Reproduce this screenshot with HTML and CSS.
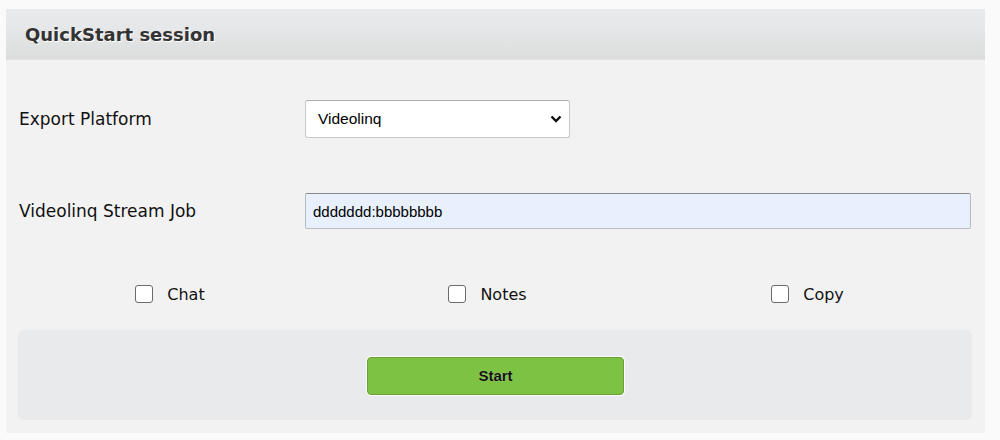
FILE: index.html
```html
<!DOCTYPE html>
<html>
<head>
<meta charset="utf-8">
<link rel="stylesheet" href="styles.css">
</head>
<body>
<div class="panel">
  <div class="panel-header">QuickStart session</div>
  <div class="panel-body">
    <div class="form-row row-platform">
      <label class="form-label">Export Platform</label>
      <div class="select">
        <span class="select-value">Videolinq</span>
        <svg class="select-arrow" width="12" height="8" viewBox="0 0 12 8"><path d="M1.5 1.5 L6 6 L10.5 1.5" fill="none" stroke="#111" stroke-width="2.4"/></svg>
      </div>
    </div>
    <div class="form-row row-job">
      <label class="form-label">Videolinq Stream Job</label>
      <div class="text-input">ddddddd:bbbbbbbb</div>
    </div>
    <div class="checks">
      <label class="check"><span class="box"></span><span>Chat</span></label>
      <label class="check"><span class="box"></span><span>Notes</span></label>
      <label class="check"><span class="box"></span><span>Copy</span></label>
    </div>
    <div class="actions">
      <button class="start-btn">Start</button>
    </div>
  </div>
</div>
</body>
</html>
```
FILE: styles.css
```css
html, body {
  margin: 0;
  padding: 0;
  background: #fafafa;
}
body {
  padding: 9px 15px 0 6px;
  font-family: Verdana, "DejaVu Sans", sans-serif;
}
.panel {
  width: 979px;
  background: #f2f2f2;
}
.panel-header {
  height: 51px;
  box-sizing: border-box;
  padding: 15px 0 0 19px;
  font-size: 18px;
  font-weight: bold;
  color: #333;
  text-shadow: 1px 1px 0 #fff;
  background: linear-gradient(#e9eaeb, #e6e7e8 40%, #dbdcdc);
  border-bottom: 1px solid #e0e0e0;
}
.panel-body {
  padding: 0 13px 13px 12px;
}
.form-row {
  display: flex;
  align-items: center;
}
.row-platform {
  padding-top: 40px;
  height: 38px;
}
.row-job {
  padding-top: 55px;
  height: 36px;
}
.form-label {
  width: 286px;
  font-size: 17px;
  color: #111;
  padding-left: 1px;
}
.select {
  width: 265px;
  height: 38px;
  box-sizing: border-box;
  background: #fff;
  border: 1px solid #c8c8c8;
  border-top-color: #b0b0b0;
  border-radius: 3px;
  display: flex;
  align-items: center;
  justify-content: space-between;
  padding: 0 7px 0 12px;
  font-family: "Liberation Sans", Arial, sans-serif;
  font-size: 15.5px;
  color: #000;
}
.text-input {
  flex: 1;
  height: 36px;
  margin-right: 1px;
  box-sizing: border-box;
  background: #e8f0fe;
  border: 1px solid #b8bcc2;
  border-top-color: #8a8a8a;
  border-radius: 2px;
  display: flex;
  align-items: center;
  padding: 0 7px;
  font-family: "Liberation Sans", Arial, sans-serif;
  font-size: 15px;
  color: #000;
}
.checks {
  display: grid;
  grid-template-columns: 1fr 1fr 1fr;
  margin-top: 51px;
  height: 28px;
  align-items: center;
}
.check {
  display: flex;
  align-items: center;
  justify-content: center;
  gap: 14px;
  font-size: 16px;
  color: #111;
}
.check:nth-child(1) { margin-left: -14px; }
.check:nth-child(2) { margin-left: -15px; }
.check:nth-child(3) { margin-left: -11px; }
.box {
  width: 18px;
  height: 18px;
  box-sizing: border-box;
  border: 1.5px solid #6b6b6b;
  border-radius: 3px;
  background: #fff;
}
.actions {
  margin-top: 22px;
  background: #e9eaec;
  border-radius: 6px;
  height: 90px;
  display: flex;
  justify-content: center;
  align-items: center;
}
.start-btn {
  width: 257px;
  height: 38px;
  margin-left: 1px;
  margin-top: 1px;
  background: #7dc242;
  border: 1px solid #6a9e36;
  border-radius: 4px;
  box-shadow: 0 0 0 1px #fff;
  font-family: "Liberation Sans", Arial, sans-serif;
  font-weight: bold;
  font-size: 15px;
  color: #111;
  text-shadow: 0 0 1px rgba(255,255,255,0.5);
}
```
